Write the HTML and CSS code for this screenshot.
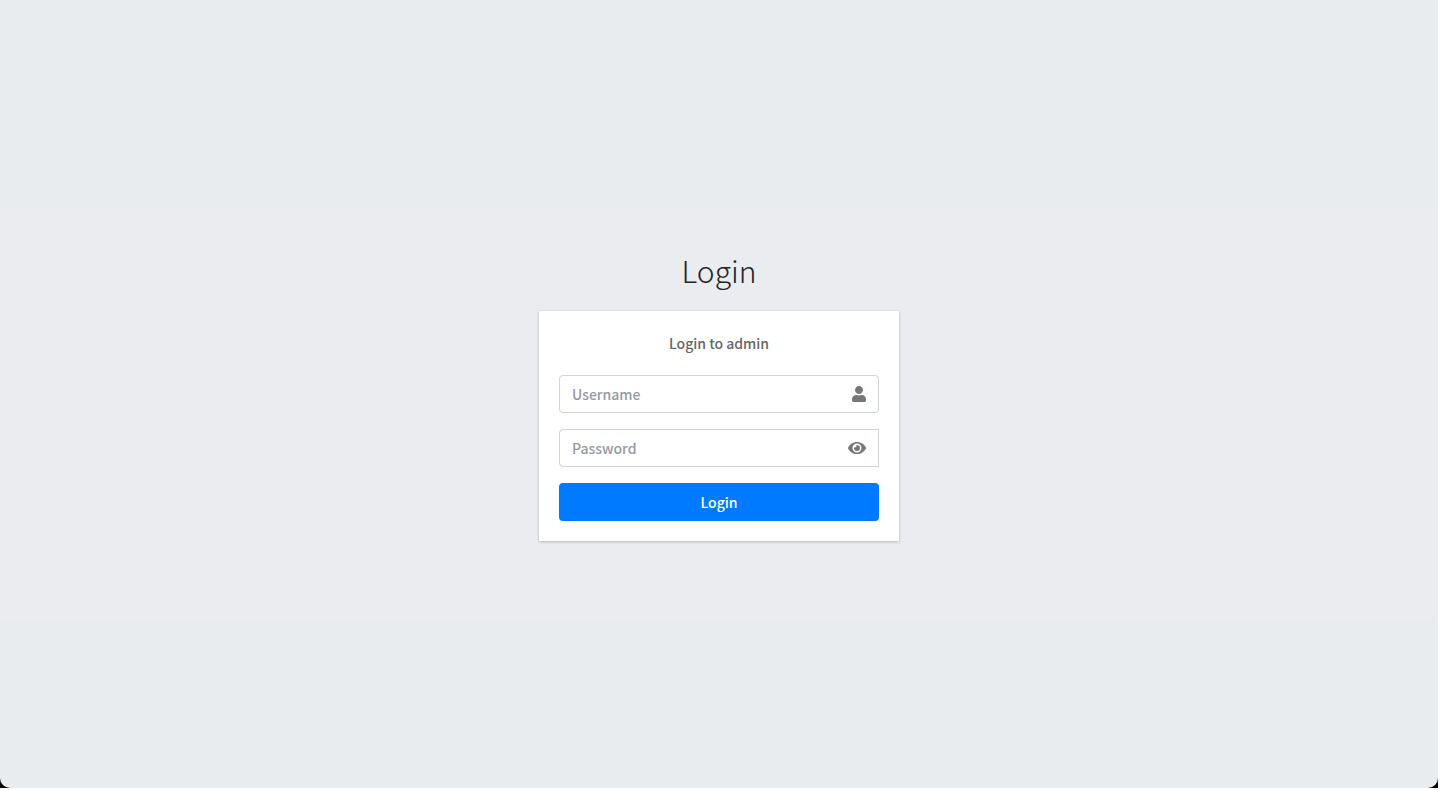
FILE: index.html
```html
<!DOCTYPE html>
<html lang="en">
<head>
    <meta charset="UTF-8">
    <meta name="viewport" content="width=device-width, initial-scale=1.0">
    <title>Login</title>
    <link rel="stylesheet" href="styles.css">
</head>
<body>
    <div class="window">
        <div class="login-page">
            <main class="login-band">
                <div class="login-box">
                    <h1 class="login-logo">Login</h1>
                    <div class="card">
                        <p class="login-box-msg">Login to admin</p>
                        <form id="loginForm">
                            <div class="input-group">
                                <input type="text" id="username" name="username" placeholder="Username" aria-label="Username">
                                <label class="input-icon" for="username">
                                    <svg class="icon-user" viewBox="0 0 448 512" aria-hidden="true">
                                        <path d="M224 256c70.700 0 128-57.300 128-128S294.700 0 224 0 96 57.300 96 128s57.300 128 128 128zm89.600 32h-16.700c-22.200 10.200-46.900 16-72.900 16s-50.600-5.800-72.900-16h-16.700C60.200 288 0 348.200 0 422.400V464c0 26.500 21.500 48 48 48h352c26.500 0 48-21.500 48-48v-41.600c0-74.200-60.200-134.400-134.400-134.400z"/>
                                    </svg>
                                </label>
                            </div>
                            <div class="input-group square">
                                <input type="password" id="password" name="password" placeholder="Password" aria-label="Password">
                                <button type="button" class="input-icon" id="togglePassword" aria-label="Show password">
                                    <svg class="icon-eye" viewBox="0 0 576 512" aria-hidden="true">
                                        <path d="M572.520 241.400C518.290 135.590 410.930 64 288 64S57.680 135.640 3.480 241.410a32.350 32.350 0 0 0 0 29.190C57.710 376.410 165.070 448 288 448s230.320-71.640 284.520-177.410a32.350 32.350 0 0 0 0-29.190zM288 400a144 144 0 1 1 144-144 143.930 143.930 0 0 1-144 144zm0-240a95.310 95.310 0 0 0-25.310 3.790 47.850 47.850 0 0 1-66.900 66.900A95.780 95.780 0 1 0 288 160z"/>
                                    </svg>
                                </button>
                            </div>
                            <button type="submit" class="btn-login">Login</button>
                        </form>
                    </div>
                </div>
            </main>
        </div>
    </div>

    <script>
        document.getElementById('togglePassword').addEventListener('click', function () {
            const password = document.getElementById('password');
            password.type = password.type === 'password' ? 'text' : 'password';
        });
    </script>
</body>
</html>
```
FILE: styles.css
```css
* {
    box-sizing: border-box;
}
body {
    font-family: "Source Sans Pro", "Noto Sans CJK JP", sans-serif;
    font-size: 14px;
    font-weight: 500;
    line-height: 24px;
    color: #212529;
    background: #fff;
    margin: 0;
    padding: 0 9px 2px 0;
}
.window {
    background: #000;
}
.login-page {
    display: flex;
    flex-direction: column;
    justify-content: center;
    min-height: calc(100vh - 2px);
    padding-top: 41px;
    background: #e8ecef;
    border-radius: 0 0 10px 10px;
}
.login-band {
    display: flex;
    justify-content: center;
    padding: 38px 0 79px;
    background: #ebecf0;
}
.login-box {
    width: 360px;
}
.login-logo {
    margin: 0 0 18px;
    font-size: 30px;
    font-weight: 300;
    line-height: 46px;
    text-align: center;
}
.card {
    padding: 20px;
    background: #fff;
    box-shadow: 0 0 1px rgba(0, 0, 0, 0.13), 0 1px 3px rgba(0, 0, 0, 0.2);
}
.login-box-msg {
    margin: 0 0 20px;
    color: #666;
    text-align: center;
}
.input-group {
    display: flex;
    height: 38px;
    margin-bottom: 16px;
    border: 1px solid #ced4da;
    border-radius: 4px;
}
.input-group.square {
    border-radius: 4px 0 0 4px;
}
.input-group input {
    flex: 1;
    min-width: 0;
    padding: 0 12px;
    border: 0;
    outline: 0;
    background: transparent;
    color: #495057;
    font: inherit;
}
.input-group input::placeholder {
    color: #939ba2;
    opacity: 1;
}
.input-icon {
    display: flex;
    align-items: center;
    padding: 0 12px;
    border: 0;
    background: transparent;
    cursor: pointer;
}
.input-icon svg {
    height: 16px;
    fill: #777;
}
.icon-user {
    width: 14px;
}
.icon-eye {
    width: 18px;
}
.btn-login {
    display: block;
    width: 100%;
    height: 38px;
    border: 0;
    border-radius: 4px;
    background: #007bff;
    color: #fff;
    font: inherit;
    cursor: pointer;
}
.btn-login:hover {
    background: #0069d9;
}
```
